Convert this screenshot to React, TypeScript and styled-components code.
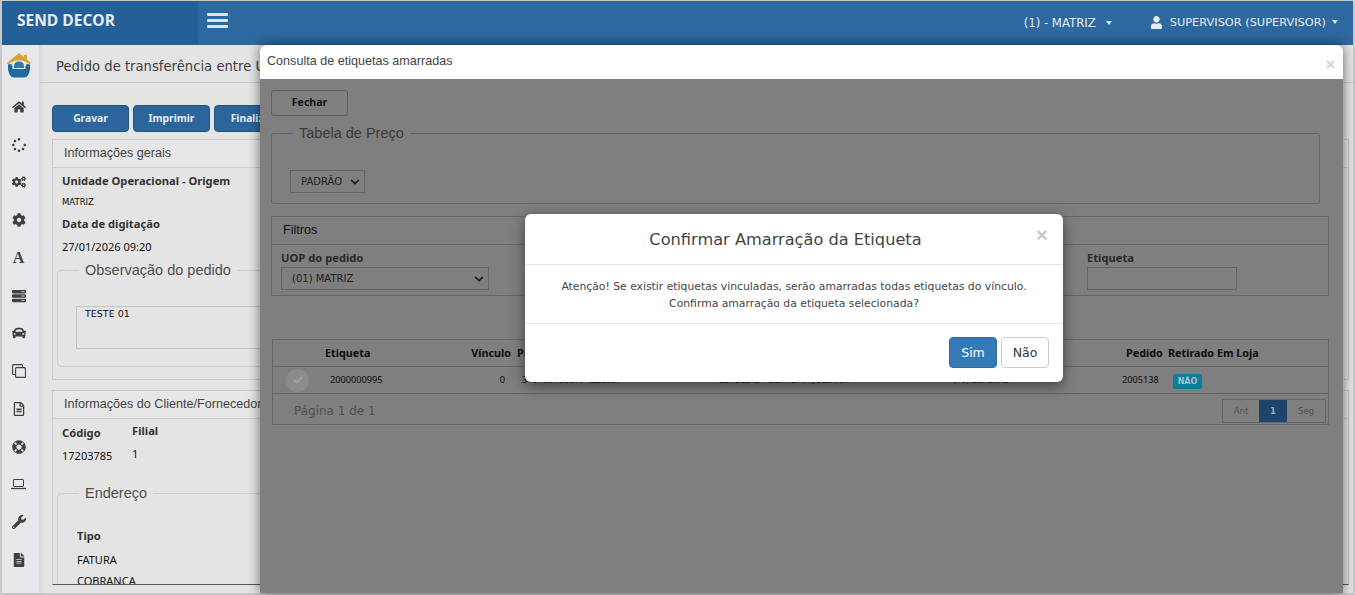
import React from 'react';
import styled, { createGlobalStyle } from 'styled-components';
import {
  FaHome,
  FaSpinner,
  FaCogs,
  FaCog,
  FaServer,
  FaCar,
  FaRegFileAlt,
  FaLifeRing,
  FaWrench,
  FaFileAlt,
  FaUser,
  FaCheck,
  FaChevronDown,
} from 'react-icons/fa';

const GlobalStyle = createGlobalStyle`
  html, body {
    margin: 0;
    height: 595px;
    overflow: hidden;
    background: #c8c8c8;
  }
  * { box-sizing: border-box; }
`;

const verdana = '"DejaVu Sans", Verdana, sans-serif';
const arial = '"Liberation Sans", Arial, sans-serif';
const tahoma = '"Noto Sans", Tahoma, sans-serif';

const Screen = styled.div`
  position: relative;
  width: 1355px;
  height: 595px;
  padding: 1px 2px 2px 2px;
  overflow: hidden;
  font-family: ${verdana};
`;

const Header = styled.header`
  display: flex;
  height: 44px;
  background: #2d689f;
  color: #e8edf2;
`;

const Brand = styled.div`
  width: 196px;
  padding: 0 0 0 15px;
  background: #255f97;
  font: bold 15.5px/38px "Open Sans", sans-serif;
  color: #e6edf3;
`;

const Burger = styled.div`
  display: flex;
  flex-direction: column;
  gap: 3px;
  margin: 12px 0 0 9px;
  span {
    width: 21px;
    height: 3px;
    border-radius: 1px;
    background: #dde5ec;
  }
`;

const HeaderRight = styled.div`
  display: flex;
  align-items: center;
  margin-left: auto;
  padding-right: 15px;
`;

const BranchName = styled.span`
  font-size: 11.7px;
`;

const Caret = styled.i<{ $gap: number }>`
  display: inline-block;
  margin-left: ${(p) => p.$gap}px;
  border-top: 4px solid #dde5ec;
  border-left: 3.5px solid transparent;
  border-right: 3.5px solid transparent;
  vertical-align: 2px;
`;

const UserName = styled.div`
  display: flex;
  align-items: center;
  margin: -2px 0 0 38px;
  font-size: 11.35px;
  svg {
    margin-right: 7px;
  }
`;

const Body = styled.div`
  display: flex;
  height: 548px;
  background: #e4e4e4;
`;

const Sidebar = styled.nav`
  display: flex;
  flex-direction: column;
  align-items: center;
  width: 38px;
  flex: none;
  padding: 8px 4px 0 0;
  background: #e6e8eb;
  border-right: 1px solid #dcdcdc;
  box-shadow: 2px 0 3px rgba(0, 0, 0, 0.05);
  color: #404040;
`;

const SideIcon = styled.div`
  display: flex;
  align-items: center;
  justify-content: center;
  width: 100%;
  height: 37.75px;
  font-size: 14px;
`;

const SerifGlyph = styled.span`
  font: bold 16px/1 "Liberation Serif", serif;
`;

const LogoBox = styled.div`
  display: flex;
  justify-content: center;
  height: 35px;
`;

const Main = styled.main`
  flex: 1;
  min-width: 0;
`;

const TitleBar = styled.div`
  height: 38px;
  padding: 14px 16px 0;
  border-bottom: 1px solid #c9c9c9;
  font-size: 13.2px;
  color: #404040;
  white-space: nowrap;
`;

const Actions = styled.div`
  display: flex;
  gap: 4px;
  margin: 22px 0 7px 12px;
`;

const BlueButton = styled.div`
  width: 77px;
  height: 27px;
  background: #2c659b;
  border: 1px solid #235481;
  border-radius: 4px;
  color: #e6edf3;
  font: bold 10.3px/24px ${tahoma};
  text-align: center;
`;

const Panel = styled.section<{ $height: number; $cut?: boolean }>`
  height: ${(p) => p.$height}px;
  margin: 0 4px 10px 12px;
  border: 1px solid #cacaca;
  border-bottom-color: ${(p) => (p.$cut ? '#555' : '#cacaca')};
`;

const PanelHead = styled.div`
  height: 28px;
  padding: 0 11px;
  background: #e6e6e6;
  border-bottom: 1px solid #cfcfcf;
  font: 12.6px/26px ${arial};
  color: #444;
  white-space: nowrap;
`;

const PanelBody = styled.div<{ $top: number }>`
  height: calc(100% - 28px);
  padding: ${(p) => p.$top}px 9px 0;
  overflow: hidden;
`;

const FieldLabel = styled.div<{ $top?: number }>`
  margin-top: ${(p) => p.$top ?? 0}px;
  font: bold 11.2px/15px ${tahoma};
  color: #333;
`;

const FieldValue = styled.div<{ $top: number }>`
  font: 11px/15px ${tahoma};
  color: #111;
  margin-top: ${(p) => p.$top}px;
`;

const SmallValue = styled.div`
  font: 8.5px/15px ${verdana};
  color: #111;
  margin: 7px 0 6px;
`;

const FieldRow = styled.div`
  display: flex;
`;

const CodeColumn = styled.div`
  width: 70px;
`;

const Fieldset = styled.fieldset<{ $height: number; $top: number }>`
  height: ${(p) => p.$height}px;
  margin: ${(p) => p.$top}px 0 0 -5px;
  padding: 27px 18px 0;
  border: 1px solid #cfcfcf;
  border-radius: 4px;
  legend {
    margin-left: 3px;
    padding: 0 6px;
    font: 14.5px/18px ${arial};
    color: #4f4f4f;
  }
`;

const AddressFieldset = styled(Fieldset)`
  padding: 19px 19px 0;
  legend {
    margin-left: 2px;
  }
`;

const NoteBox = styled.div`
  height: 43px;
  padding: 0 8px;
  border: 1px solid #c4c4c4;
  font: 9.5px/13px ${verdana};
  color: #111;
`;

const DialogWindow = styled.div`
  position: absolute;
  left: 260px;
  top: 45px;
  width: 1083px;
  height: 548px;
  border-radius: 6px 6px 0 0;
  background: #7f7f7f;
  box-shadow: 0 0 12px rgba(0, 0, 0, 0.55);
  color: #111;
`;

const DialogHead = styled.div`
  display: flex;
  justify-content: space-between;
  height: 34px;
  padding: 9px 8px 0 7px;
  background: #fff;
  border-radius: 6px 6px 0 0;
  font: 12.6px/15px ${arial};
  color: #444;
`;

const CloseMark = styled.span<{ $size: number; $color: string }>`
  font: bold ${(p) => p.$size}px/1 ${arial};
  color: ${(p) => p.$color};
`;

const DialogClose = styled(CloseMark)`
  margin-top: 3px;
`;

const DialogBody = styled.div`
  padding: 11px 11px 0;
`;

const GhostButton = styled.div`
  width: 77px;
  height: 26px;
  border: 1px solid #5f5f5f;
  border-radius: 3px;
  font: bold 10.5px/22px ${tahoma};
  text-align: center;
`;

const DarkFieldset = styled.fieldset`
  height: 80px;
  margin: 8px 12px 0 0;
  padding: 0 18px;
  border: 1px solid #656565;
  border-radius: 3px;
  legend {
    margin-left: 3px;
    padding: 0 6px;
    font: 14.5px/18px ${arial};
    color: #3a3a3a;
  }
`;

const Picker = styled.div<{ $width: number }>`
  display: flex;
  align-items: center;
  justify-content: space-between;
  width: ${(p) => p.$width}px;
  height: 23px;
  padding: 0 4px 0 10px;
  border: 1px solid #656565;
  font: 10px/21px ${verdana};
  color: #1c1c1c;
`;

const PickerSpot = styled.div`
  margin-top: 28px;
`;

const DarkPanel = styled.div`
  margin: 12px 3px 0 0;
  height: 80px;
  border: 1px solid #656565;
`;

const DarkPanelHead = styled.div`
  height: 28px;
  padding: 0 11px;
  border-bottom: 1px solid #656565;
  font: 12.6px/26px ${arial};
  color: #0e0e0e;
`;

const FilterRow = styled.div`
  display: flex;
  justify-content: space-between;
  padding: 6px 91px 0 9px;
`;

const FilterLabel = styled.div`
  margin-bottom: 2px;
  font: bold 11.2px/14px ${tahoma};
  color: #2a2a2a;
`;

const EmptyInput = styled.div`
  width: 150px;
  height: 23px;
  border: 1px solid #656565;
`;

const DataTable = styled.div`
  margin: 43px 3px 0 1px;
  border: 1px solid #656565;
`;

const TableRow = styled.div<{ $header?: boolean }>`
  display: grid;
  grid-template-columns: 52px 105px 81px 208px 234px 169px 46px 1fr;
  align-items: center;
  height: 27px;
  border-bottom: 1px solid #656565;
  font: ${(p) => (p.$header ? 'bold 10.8px' : '9.2px')}/14px ${tahoma};
  color: #0c0c0c;
  white-space: nowrap;
`;

const Cell = styled.div<{ $right?: boolean; $pad?: number }>`
  text-align: ${(p) => (p.$right ? 'right' : 'left')};
  padding: 0 ${(p) => (p.$right ? (p.$pad ?? 0) : 0)}px 0 ${(p) => (p.$right ? 0 : (p.$pad ?? 0))}px;
`;

const CheckCircle = styled.div`
  display: flex;
  align-items: center;
  justify-content: center;
  width: 23px;
  height: 23px;
  margin-left: 13px;
  border-radius: 50%;
  background: #8b8b8b;
  color: #a0a0a0;
  font-size: 10px;
`;

const TagNo = styled.span`
  display: block;
  width: 29px;
  height: 15px;
  margin: 2px 0 0 5px;
  border-radius: 2px;
  background: #0d7e9e;
  color: #a7c0c9;
  font: bold 8px/15px ${verdana};
  text-align: center;
`;

const TableFoot = styled.div`
  display: flex;
  align-items: flex-end;
  justify-content: space-between;
  height: 30px;
  padding: 0 2px 1px 21px;
  font: 12px/24px ${verdana};
  color: #505050;
`;

const Pager = styled.div`
  display: flex;
  height: 24px;
  border: 1px solid #656565;
`;

const PageCell = styled.div<{ $active?: boolean; $width: number }>`
  width: ${(p) => p.$width}px;
  background: ${(p) => (p.$active ? '#1d4469' : 'transparent')};
  color: ${(p) => (p.$active ? '#9aa9b8' : '#525252')};
  font: ${(p) => (p.$active ? 'bold' : 'normal')} 8.5px/22px ${verdana};
  text-align: center;
`;

const ConfirmBox = styled.div`
  position: absolute;
  left: 525px;
  top: 214px;
  width: 538px;
  height: 168px;
  background: #fff;
  border-radius: 6px;
  box-shadow: 0 4px 14px rgba(0, 0, 0, 0.5);
`;

const ConfirmHead = styled.div`
  position: relative;
  height: 51px;
  padding-right: 17px;
  border-bottom: 1px solid #e5e5e5;
  font: 16.2px/51px ${verdana};
  color: #444;
  text-align: center;
`;

const ConfirmClose = styled.div`
  position: absolute;
  right: 15px;
  top: 10px;
  line-height: 20px;
`;

const ConfirmText = styled.div`
  height: 59px;
  padding-top: 13px;
  border-bottom: 1px solid #e5e5e5;
  font: 10.8px/17px ${verdana};
  color: #444;
  text-align: center;
`;

const ConfirmFoot = styled.div`
  display: flex;
  justify-content: flex-end;
  gap: 4px;
  padding: 13px 14px 0;
`;

const ConfirmButton = styled.div<{ $primary?: boolean }>`
  width: 48px;
  height: 31px;
  border: 1px solid ${(p) => (p.$primary ? '#2e6da4' : '#ccc')};
  border-radius: 4px;
  background: ${(p) => (p.$primary ? '#337ab7' : '#fff')};
  color: ${(p) => (p.$primary ? '#fff' : '#333')};
  font: 12.5px/29px ${verdana};
  text-align: center;
`;

const Logo = () => (
  <svg width="26" height="26" viewBox="0 0 26 26">
    <path
      d="M13 0 L18 4 L18 2 L21 2 L21 6.5 L25 10 Q24.5 11.5 23 11 Q13 3.5 3 11 Q1.5 11.5 1 10 Z"
      fill="#dca232"
    />
    <path
      d="M2 11.5 Q6 10 6.5 13.5 L6.5 16 L19.5 16 L19.5 13.5 Q20 10 24 11.5 Q24.5 18 22 22 Q21 24.5 18 24.5 L8 24.5 Q5 24.5 4 22 Q1.5 18 2 11.5 Z"
      fill="#1c6ba3"
    />
    <path d="M8 13 Q8 8.5 13 8.5 Q18 8.5 18 13 L18 15 L8 15 Z" fill="#2a7db8" />
  </svg>
);

const LaptopIcon = () => (
  <svg width="15" height="12" viewBox="0 0 15 12" fill="none" stroke="currentColor">
    <rect x="2.5" y="1.5" width="10" height="7" rx="0.5" />
    <path d="M0 10.5 H15" strokeWidth="1.3" />
  </svg>
);

const CopyIcon = () => (
  <svg width="14" height="14" viewBox="0 0 14 14" fill="none" stroke="currentColor" strokeWidth="1.1">
    <path d="M3.5 10.5 H1.5 Q0.6 10.5 0.6 9.5 V1.5 Q0.6 0.6 1.5 0.6 H9.5 Q10.5 0.6 10.5 1.5 V3.5" />
    <rect x="3.6" y="3.6" width="9.8" height="9.8" rx="1" />
  </svg>
);

const sideIcons = [
  <FaHome key="home" />,
  <FaSpinner key="spinner" />,
  <FaCogs key="cogs" />,
  <FaCog key="cog" />,
  <SerifGlyph key="font">A</SerifGlyph>,
  <FaServer key="server" />,
  <FaCar key="car" />,
  <CopyIcon key="copy" />,
  <FaRegFileAlt key="file" />,
  <FaLifeRing key="ring" />,
  <LaptopIcon key="laptop" />,
  <FaWrench key="wrench" />,
  <FaFileAlt key="doc" />,
];

export default function App() {
  return (
    <Screen>
      <GlobalStyle />
      <Header>
        <Brand>SEND DECOR</Brand>
        <Burger>
          <span />
          <span />
          <span />
        </Burger>
        <HeaderRight>
          <BranchName>
            (1) - MATRIZ
            <Caret $gap={10} />
          </BranchName>
          <UserName>
            <FaUser size={13} />
            SUPERVISOR (SUPERVISOR)
            <Caret $gap={6} />
          </UserName>
        </HeaderRight>
      </Header>
      <Body>
        <Sidebar>
          <LogoBox>
            <Logo />
          </LogoBox>
          {sideIcons.map((icon) => (
            <SideIcon key={icon.key}>{icon}</SideIcon>
          ))}
        </Sidebar>
        <Main>
          <TitleBar>Pedido de transferência entre UOP</TitleBar>
          <Actions>
            <BlueButton>Gravar</BlueButton>
            <BlueButton>Imprimir</BlueButton>
            <BlueButton>Finalizar</BlueButton>
          </Actions>
          <Panel $height={241}>
            <PanelHead>Informações gerais</PanelHead>
            <PanelBody $top={5}>
              <FieldLabel>Unidade Operacional - Origem</FieldLabel>
              <SmallValue>MATRIZ</SmallValue>
              <FieldLabel>Data de digitação</FieldLabel>
              <FieldValue $top={8}>27/01/2026 09:20</FieldValue>
              <Fieldset $height={106} $top={7}>
                <legend>Observação do pedido</legend>
                <NoteBox>TESTE 01</NoteBox>
              </Fieldset>
            </PanelBody>
          </Panel>
          <Panel $height={195} $cut>
            <PanelHead>Informações do Cliente/Fornecedor</PanelHead>
            <PanelBody $top={4}>
              <FieldRow>
                <CodeColumn>
                  <FieldLabel $top={2}>Código</FieldLabel>
                  <FieldValue $top={8}>17203785</FieldValue>
                </CodeColumn>
                <div>
                  <FieldLabel>Filial</FieldLabel>
                  <FieldValue $top={8}>1</FieldValue>
                </div>
              </FieldRow>
              <AddressFieldset $height={110} $top={21}>
                <legend>Endereço</legend>
                <FieldLabel $top={7}>Tipo</FieldLabel>
                <FieldValue $top={9}>FATURA</FieldValue>
                <FieldValue $top={6}>COBRANCA</FieldValue>
              </AddressFieldset>
            </PanelBody>
          </Panel>
        </Main>
      </Body>

      <DialogWindow>
        <DialogHead>
          Consulta de etiquetas amarradas
          <DialogClose $size={16} $color="#d4d4d4">×</DialogClose>
        </DialogHead>
        <DialogBody>
          <GhostButton>Fechar</GhostButton>
          <DarkFieldset>
            <legend>Tabela de Preço</legend>
            <PickerSpot>
              <Picker $width={75}>
                PADRÃO
                <FaChevronDown size={10} />
              </Picker>
            </PickerSpot>
          </DarkFieldset>
          <DarkPanel>
            <DarkPanelHead>Filtros</DarkPanelHead>
            <FilterRow>
              <div>
                <FilterLabel>UOP do pedido</FilterLabel>
                <Picker $width={208}>
                  (01) MATRIZ
                  <FaChevronDown size={10} />
                </Picker>
              </div>
              <div>
                <FilterLabel>Etiqueta</FilterLabel>
                <EmptyInput />
              </div>
            </FilterRow>
          </DarkPanel>
          <DataTable>
            <TableRow $header>
              <span />
              <Cell>Etiqueta</Cell>
              <Cell $right>Vínculo</Cell>
              <Cell $pad={6}>Produto</Cell>
              <span />
              <span />
              <Cell $pad={4}>Pedido</Cell>
              <Cell>Retirado Em Loja</Cell>
            </TableRow>
            <TableRow>
              <CheckCircle>
                <FaCheck />
              </CheckCircle>
              <Cell $pad={5}>2000000995</Cell>
              <Cell $right $pad={6}>0</Cell>
              <Cell $pad={11}>3401001009771228097</Cell>
              <Cell>ESPECIAL POLTRONA JULIANA</Cell>
              <Cell>(70) ESPERAS</Cell>
              <Cell>2005138</Cell>
              <Cell>
                <TagNo>NÃO</TagNo>
              </Cell>
            </TableRow>
            <TableFoot>
              Página 1 de 1
              <Pager>
                <PageCell $width={36}>Ant</PageCell>
                <PageCell $width={28} $active>1</PageCell>
                <PageCell $width={38}>Seg</PageCell>
              </Pager>
            </TableFoot>
          </DataTable>
        </DialogBody>
      </DialogWindow>

      <ConfirmBox>
        <ConfirmHead>
          Confirmar Amarração da Etiqueta
          <ConfirmClose>
            <CloseMark $size={21} $color="#c9c9c9">×</CloseMark>
          </ConfirmClose>
        </ConfirmHead>
        <ConfirmText>
          Atenção! Se existir etiquetas vinculadas, serão amarradas todas etiquetas do vínculo.
          <br />
          Confirma amarração da etiqueta selecionada?
        </ConfirmText>
        <ConfirmFoot>
          <ConfirmButton $primary>Sim</ConfirmButton>
          <ConfirmButton>Não</ConfirmButton>
        </ConfirmFoot>
      </ConfirmBox>
    </Screen>
  );
}
